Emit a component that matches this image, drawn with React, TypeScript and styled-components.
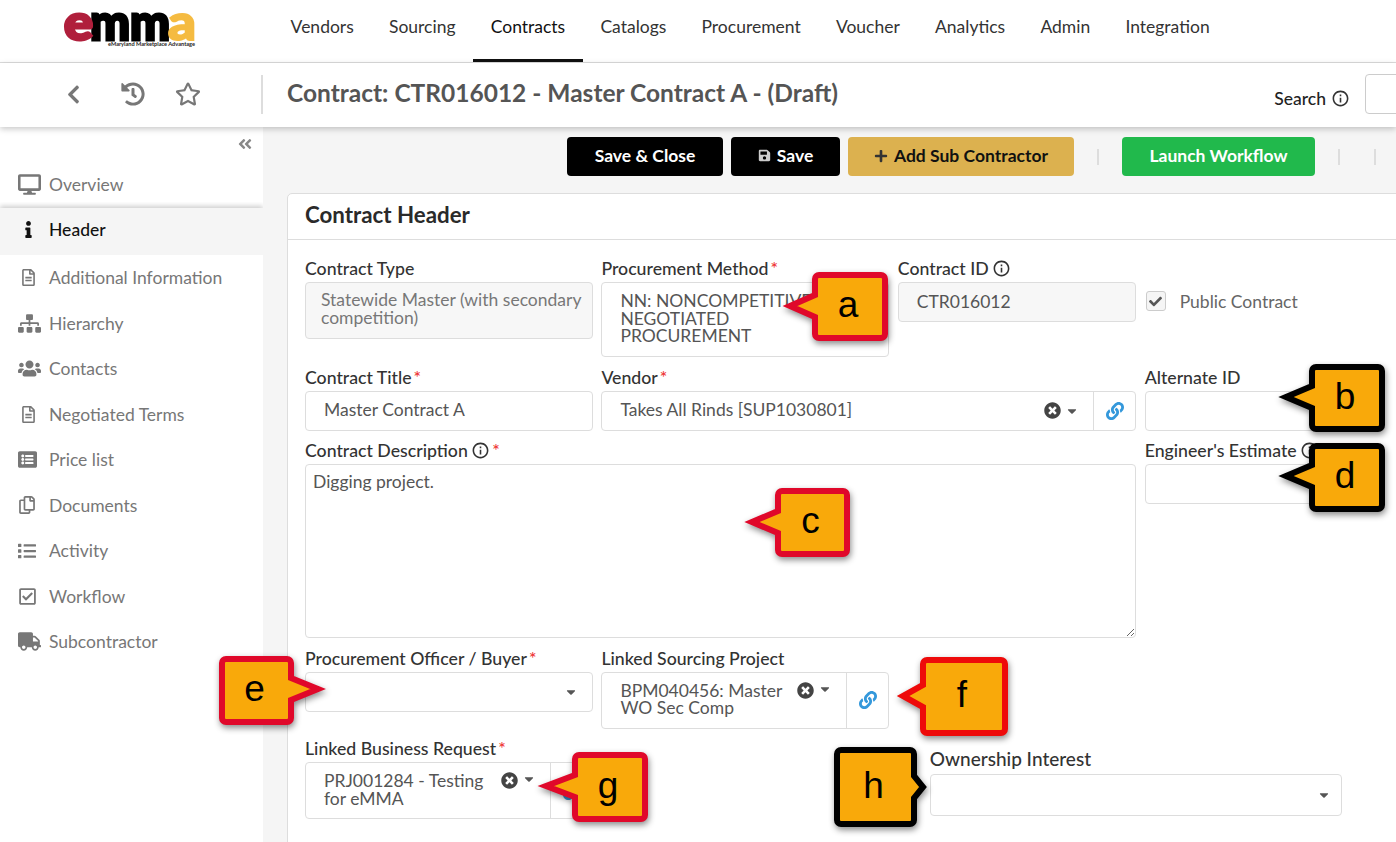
import React from "react";
import styled, { createGlobalStyle } from "styled-components";
import {
  FaAngleDoubleLeft, FaCaretDown, FaCheck, FaChevronLeft, FaDesktop, FaHistory, FaInfo, FaLink, FaList,
  FaListAlt, FaRegCheckSquare, FaRegCopy, FaRegFileAlt, FaRegStar, FaSave, FaSitemap, FaTimesCircle, FaTruck, FaUsers, FaPlus,
} from "react-icons/fa";
import { MdInfoOutline } from "react-icons/md";

const GlobalStyle = createGlobalStyle`
  html, body { margin: 0; padding: 0; background: #fff; overflow: hidden; }
  * { box-sizing: border-box; }
  body { font-family: Lato, "Open Sans", sans-serif; }
`;

const Page = styled.div`
  position: relative;
  width: 1396px;
  height: 842px;
  overflow: hidden;
  display: flex;
  flex-direction: column;
`;

const TopNav = styled.header`
  display: flex;
  height: 63px;
  border-bottom: 1px solid #ddd;
  flex: none;
`;

const LogoSlot = styled.div`
  width: 273px;
  padding: 10px 0 0 62px;
  flex: none;
`;

const LogoSvg = styled.svg`
  overflow: visible;
`;

const NavItem = styled.div<{ $active?: boolean }>`
  padding: 0 17.6px 6px;
  display: flex;
  align-items: center;
  font-size: 17.5px;
  color: ${(p) => (p.$active ? "#111" : "#333")};
  border-bottom: 3px solid ${(p) => (p.$active ? "#111" : "transparent")};
  height: 62px;
`;

const SubBar = styled.div`
  position: relative;
  z-index: 2;
  height: 64px;
  flex: none;
  display: flex;
  align-items: center;
  background: #fff;
  box-shadow: 0 2px 6px rgba(0, 0, 0, 0.22);
`;

const SubIcons = styled.div`
  width: 263px;
  height: 39px;
  flex: none;
  display: flex;
  align-items: center;
  padding-left: 63px;
  gap: 37px;
  color: #777;
  border-right: 2px solid #ddd;
  margin-bottom: 2px;
`;

const FavIcon = styled(FaRegStar)`
  margin-left: -7px;
`;

const PageTitle = styled.h1`
  margin: 0 0 6px 24px;
  font-size: 24.5px;
  font-weight: 700;
  color: #555;
  white-space: nowrap;
`;

const SearchBox = styled.div`
  margin-left: auto;
  display: flex;
  align-items: center;
  gap: 5px;
  font-size: 17.5px;
  font-weight: 500;
  color: #222;
  padding-top: 9px;
  margin-bottom: 2px;
`;

const SearchInput = styled.div`
  width: 60px;
  height: 40px;
  margin: -9px -29px 0 10px;
  border: 1px solid #ccc;
  border-radius: 4px;
`;

const Body = styled.div`
  flex: 1;
  display: flex;
  min-height: 0;
`;

const Sidebar = styled.nav`
  width: 263px;
  flex: none;
  background: #fff;
`;

const Collapse = styled.div`
  height: 34px;
  padding: 9px 10px 0 0;
  display: flex;
  justify-content: flex-end;
  color: #888;
`;

const SideItem = styled.div<{ $active?: boolean; $tall?: boolean }>`
  height: ${(p) => (p.$tall ? "47px" : "45.5px")};
  display: flex;
  align-items: center;
  padding-left: 18px;
  font-size: 17.5px;
  color: ${(p) => (p.$active ? "#111" : "#777")};
  background: ${(p) => (p.$active ? "#f5f5f5" : "#fff")};
  ${(p) => p.$active && "font-weight: 500; padding-bottom: 4px; box-shadow: 0 -2px 5px rgba(0,0,0,.2); clip-path: inset(-6px 0 0 0);"}
`;

const SideIcon = styled.span`
  width: 31px;
  flex: none;
  display: flex;
  align-items: center;
`;

const IconNudge = styled.span`
  display: flex;
  padding-left: 2px;
`;

const Main = styled.main`
  flex: 1;
  min-width: 0;
  background: #f5f5f5;
  padding-top: 10px;
`;

const Toolbar = styled.div`
  display: flex;
  align-items: center;
  height: 39px;
  padding-left: 304px;
  gap: 8px;
`;

const ActionButton = styled.div<{ $bg: string; $fg: string; $w: number }>`
  width: ${(p) => p.$w}px;
  height: 39px;
  flex: none;
  border-radius: 4px;
  background: ${(p) => p.$bg};
  color: ${(p) => p.$fg};
  font-size: 17.5px;
  font-weight: 700;
  display: flex;
  align-items: center;
  justify-content: center;
  gap: 6px;
  padding-bottom: 2px;
`;

const ToolSep = styled.div<{ $gap: number }>`
  width: 2px;
  height: 16px;
  flex: none;
  background: #ddd;
  margin: 0 ${(p) => p.$gap}px;
`;

const Panel = styled.section`
  width: 1200px;
  margin: 17px 0 0 24px;
  background: #fff;
  border: 1px solid #ddd;
  border-radius: 5px 0 0 0;
  height: 700px;
`;

const PanelTitle = styled.h2`
  margin: 0;
  height: 46px;
  padding: 7px 0 0 17px;
  border-bottom: 1px solid #ddd;
  font-size: 22.3px;
  font-weight: 700;
  color: #2a2a2a;
  line-height: 27px;
`;

const FormGrid = styled.div`
  display: grid;
  grid-template-columns: 288px 288px 238.5px 240px;
  column-gap: 8.4px;
  row-gap: 10.5px;
  padding: 19px 0 0 17px;
  align-items: start;
`;

const Field = styled.div<{ $span?: number; $offset?: number; $top?: number }>`
  grid-column: span ${(p) => p.$span ?? 1};
  margin-left: ${(p) => p.$offset ?? 0}px;
  margin-top: ${(p) => p.$top ?? 0}px;
`;

const Label = styled.div<{ $h?: number; $size?: number }>`
  height: ${(p) => p.$h ?? 23}px;
  font-size: ${(p) => p.$size ?? 17.7}px;
  font-weight: 500;
  line-height: 20px;
  color: #333;
  display: flex;
  align-items: flex-start;
  gap: 3.5px;
  white-space: nowrap;
`;

const Star = styled.span`
  color: #e33;
  margin-left: -1.5px;
`;

const TextBox = styled.input<{ $h?: number }>`
  display: block;
  width: 100%;
  height: ${(p) => p.$h ?? 40}px;
  border: 1px solid #ddd;
  border-radius: 4px;
  padding: 0 18px 2px;
  font: 17.5px Lato, sans-serif;
  color: #555;
  background: ${(p) => (p.disabled ? "#f7f7f7" : "#fff")};
  outline: none;
`;

const NoteArea = styled.textarea`
  display: block;
  width: 100%;
  height: 174px;
  border: 1px solid #ddd;
  border-radius: 4px;
  padding: 8px 7px;
  font: 17.5px/18px Lato, sans-serif;
  color: #555;
  outline: none;
`;

const WrapBox = styled.div<{ $h: number; $pad: number; $left: number; $right: number; $muted?: boolean }>`
  height: ${(p) => p.$h}px;
  border: 1px solid #ddd;
  border-radius: 4px;
  padding: ${(p) => p.$pad}px ${(p) => p.$right}px 0 ${(p) => p.$left}px;
  font-size: 17.5px;
  line-height: 17.5px;
  color: ${(p) => (p.$muted ? "#777" : "#555")};
  background: ${(p) => (p.$muted ? "#f7f7f7" : "#fff")};
`;

const SelectBox = styled.div<{ $h?: number; $w?: number }>`
  display: flex;
  height: ${(p) => p.$h ?? 40}px;
  width: ${(p) => (p.$w ? `${p.$w}px` : "auto")};
  border: 1px solid #ddd;
  border-radius: 4px;
  background: #fff;
  font-size: 17.5px;
  line-height: 17.5px;
  color: #555;
`;

const SelectValue = styled.div`
  flex: 1;
  min-width: 0;
  padding: 0 6px 2px 18px;
  display: flex;
  align-items: center;
`;

const SelectControls = styled.div<{ $top?: boolean; $right?: number }>`
  flex: none;
  display: flex;
  align-items: ${(p) => (p.$top ? "flex-start" : "center")};
  padding: ${(p) => (p.$top ? "9px" : "0")} ${(p) => p.$right ?? 14}px 0 0;
  gap: 4px;
  color: #444;
`;

const LinkCell = styled.div`
  width: 42px;
  flex: none;
  border-left: 1px solid #ddd;
  display: flex;
  align-items: center;
  justify-content: center;
  color: #3498db;
`;

const CheckRow = styled.div`
  display: flex;
  align-items: center;
  height: 38px;
  margin-top: 23px;
  gap: 14px;
  padding-left: 1px;
  font-size: 17.5px;
  color: #666;
`;

const CheckMark = styled.div`
  width: 20px;
  height: 20px;
  border: 1px solid #ccc;
  border-radius: 3px;
  background: #f5f5f5;
  color: #555;
  display: flex;
  align-items: center;
  justify-content: center;
`;

const CalloutWrap = styled.div<{ $x: number; $y: number; $w: number; $h: number }>`
  position: absolute;
  z-index: 5;
  left: ${(p) => p.$x}px;
  top: ${(p) => p.$y}px;
  width: ${(p) => p.$w}px;
  height: ${(p) => p.$h}px;
`;

const CalloutSvg = styled.svg`
  position: absolute;
  left: -50px;
  top: -20px;
  overflow: visible;
  filter: drop-shadow(1px 3px 3px rgba(0, 0, 0, 0.45));
`;

const CalloutLetter = styled.div`
  position: absolute;
  inset: 0;
  display: flex;
  align-items: center;
  justify-content: center;
  font: 37px "Liberation Sans", Arial, sans-serif;
  color: #000;
  padding: 0 4px 3px 0;
`;

type CalloutProps = {
  letter: string;
  x: number;
  y: number;
  w: number;
  h: number;
  tipX: number;
  tipY: number;
  color: string;
};

// tip is the outer point; the stroke miter adds about 8px beyond the path point
function Callout({ letter, x, y, w, h, tipX, tipY, color }: CalloutProps) {
  const s = 3;
  const r = 4;
  const l = s;
  const t = s;
  const ri = w - s;
  const b = h - s;
  const cy = tipY - y;
  const base = 11;
  const left = tipX < x;
  const px = left ? tipX - x + 8 : tipX - x - 8;
  const leftSide = left ? `V${cy + base} L${px},${cy} L${l},${cy - base}` : "";
  const rightSide = left ? "" : `V${cy - base} L${px},${cy} L${ri},${cy + base}`;
  const d =
    `M${l + r},${t} H${ri - r} A${r},${r} 0 0 1 ${ri},${t + r} ${rightSide} V${b - r} A${r},${r} 0 0 1 ${ri - r},${b} ` +
    `H${l + r} A${r},${r} 0 0 1 ${l},${b - r} ${leftSide} V${t + r} A${r},${r} 0 0 1 ${l + r},${t} Z`;
  return (
    <CalloutWrap $x={x} $y={y} $w={w} $h={h}>
      <CalloutSvg width={w + 100} height={h + 40} viewBox={`-50 -20 ${w + 100} ${h + 40}`}>
        <path d={d} fill="#f9a90a" stroke={color} strokeWidth={6} strokeLinejoin="miter" strokeMiterlimit={8} />
      </CalloutSvg>
      <CalloutLetter>{letter}</CalloutLetter>
    </CalloutWrap>
  );
}

function EmmaLogo() {
  return (
    <LogoSvg width="140" height="42" viewBox="0 0 140 42">
      <text x="28" y="30" fontFamily="Lato" fontWeight="900" fontSize="50" fill="#000" stroke="#000" strokeWidth="3" textLength="80" lengthAdjust="spacingAndGlyphs">mm</text>
      <text x="2" y="30" fontFamily="Lato" fontWeight="900" fontSize="50" fill="#b01f3c" stroke="#b01f3c" strokeWidth="3" textLength="29" lengthAdjust="spacingAndGlyphs">e</text>
      <text x="106" y="30" fontFamily="Lato" fontWeight="900" fontSize="50" fill="#f5bb41" stroke="#f5bb41" strokeWidth="2" textLength="28" lengthAdjust="spacingAndGlyphs">a</text>
      <text x="46" y="36" fontFamily="Lato" fontWeight="700" fontSize="5.4" fill="#222" textLength="87" lengthAdjust="spacingAndGlyphs">eMaryland Marketplace Advantage</text>
    </LogoSvg>
  );
}

const navItems = ["Vendors", "Sourcing", "Contracts", "Catalogs", "Procurement", "Voucher", "Analytics", "Admin", "Integration"];

const sideItems = [
  { label: "Overview", icon: <FaDesktop size={23} />, tall: true },
  { label: "Header", icon: <IconNudge><FaInfo size={17} /></IconNudge>, tall: true, active: true },
  { label: "Additional Information", icon: <IconNudge><FaRegFileAlt size={17} /></IconNudge> },
  { label: "Hierarchy", icon: <FaSitemap size={23} /> },
  { label: "Contacts", icon: <FaUsers size={23} /> },
  { label: "Negotiated Terms", icon: <IconNudge><FaRegFileAlt size={17} /></IconNudge> },
  { label: "Price list", icon: <FaListAlt size={19} /> },
  { label: "Documents", icon: <FaRegCopy size={18} /> },
  { label: "Activity", icon: <FaList size={18} /> },
  { label: "Workflow", icon: <FaRegCheckSquare size={19} /> },
  { label: "Subcontractor", icon: <FaTruck size={23} /> },
];

const Info = () => <MdInfoOutline size={19} color="#333" />;
const Caret = () => <FaCaretDown size={14} color="#555" />;
const Clear = () => <FaTimesCircle size={17} color="#444" />;

export default function App() {
  return (
    <Page>
      <GlobalStyle />
      <TopNav>
        <LogoSlot><EmmaLogo /></LogoSlot>
        {navItems.map((n) => (
          <NavItem key={n} $active={n === "Contracts"}>{n}</NavItem>
        ))}
      </TopNav>
      <SubBar>
        <SubIcons>
          <FaChevronLeft size={21} />
          <FaHistory size={24} />
          <FavIcon size={26} />
        </SubIcons>
        <PageTitle>Contract: CTR016012 - Master Contract A - (Draft)</PageTitle>
        <SearchBox>
          Search <Info />
          <SearchInput />
        </SearchBox>
      </SubBar>
      <Body>
        <Sidebar>
          <Collapse><FaAngleDoubleLeft size={16} /></Collapse>
          {sideItems.map((s) => (
            <SideItem key={s.label} $active={s.active} $tall={s.tall}>
              <SideIcon>{s.icon}</SideIcon>
              {s.label}
            </SideItem>
          ))}
        </Sidebar>
        <Main>
          <Toolbar>
            <ActionButton $bg="#000" $fg="#fff" $w={156}>Save &amp; Close</ActionButton>
            <ActionButton $bg="#000" $fg="#fff" $w={109}><FaSave size={13} color="#ccc" /> Save</ActionButton>
            <ActionButton $bg="#dcb14f" $fg="#111" $w={226}><FaPlus size={14} color="#333" /> Add Sub Contractor</ActionButton>
            <ToolSep $gap={15} />
            <ActionButton $bg="#21b94c" $fg="#fff" $w={193}>Launch Workflow</ActionButton>
            <ToolSep $gap={15} />
            <ToolSep $gap={11} />
          </Toolbar>
          <Panel>
            <PanelTitle>Contract Header</PanelTitle>
            <FormGrid>
              <Field>
                <Label>Contract Type</Label>
                <WrapBox $h={57} $pad={8} $left={15} $right={8} $muted>Statewide Master (with secondary competition)</WrapBox>
              </Field>
              <Field>
                <Label>Procurement Method<Star>*</Star></Label>
                <WrapBox $h={75} $pad={9} $left={18} $right={70}>NN: NONCOMPETITIVE NEGOTIATED PROCUREMENT</WrapBox>
              </Field>
              <Field>
                <Label>Contract ID <Info /></Label>
                <TextBox disabled readOnly value="CTR016012" />
              </Field>
              <Field>
                <CheckRow>
                  <CheckMark><FaCheck size={13} /></CheckMark>
                  Public Contract
                </CheckRow>
              </Field>

              <Field>
                <Label>Contract Title<Star>*</Star></Label>
                <TextBox readOnly value="Master Contract A" />
              </Field>
              <Field $span={2}>
                <Label>Vendor<Star>*</Star></Label>
                <SelectBox>
                  <SelectValue>Takes All Rinds [SUP1030801]</SelectValue>
                  <SelectControls><Clear /><Caret /></SelectControls>
                  <LinkCell><FaLink size={18} /></LinkCell>
                </SelectBox>
              </Field>
              <Field>
                <Label>Alternate ID</Label>
                <TextBox readOnly value="" />
              </Field>

              <Field $span={3}>
                <Label>Contract Description <Info /><Star>*</Star></Label>
                <NoteArea readOnly value="Digging project." />
              </Field>
              <Field>
                <Label>Engineer's Estimate <Info /></Label>
                <TextBox readOnly value="" />
              </Field>

              <Field>
                <Label>Procurement Officer / Buyer<Star>*</Star></Label>
                <SelectBox>
                  <SelectValue />
                  <SelectControls><Caret /></SelectControls>
                </SelectBox>
              </Field>
              <Field>
                <Label>Linked Sourcing Project</Label>
                <SelectBox $h={57}>
                  <SelectValue>BPM040456: Master WO Sec Comp</SelectValue>
                  <SelectControls $top><Clear /><Caret /></SelectControls>
                  <LinkCell><FaLink size={18} /></LinkCell>
                </SelectBox>
              </Field>
              <Field $span={2} />

              <Field>
                <Label>Linked Business Request<Star>*</Star></Label>
                <SelectBox $h={57}>
                  <SelectValue>PRJ001284 - Testing for eMMA</SelectValue>
                  <SelectControls $top><Clear /><Caret /></SelectControls>
                  <LinkCell><FaLink size={18} /></LinkCell>
                </SelectBox>
              </Field>
              <Field />
              <Field $span={2} $offset={32} $top={10}>
                <Label $h={25} $size={19}>Ownership Interest</Label>
                <SelectBox $h={42} $w={412}>
                  <SelectValue />
                  <SelectControls $right={10}><Caret /></SelectControls>
                </SelectBox>
              </Field>
            </FormGrid>
          </Panel>
        </Main>
      </Body>

      <Callout letter="a" x={812} y={272} w={76} h={69} tipX={782} tipY={306} color="#e0082a" />
      <Callout letter="b" x={1309} y={364} w={76} h={68} tipX={1278} tipY={397} color="#000" />
      <Callout letter="c" x={775} y={488} w={75} h={69} tipX={744} tipY={522} color="#e0082a" />
      <Callout letter="d" x={1309} y={443} w={76} h={69} tipX={1278} tipY={476} color="#000" />
      <Callout letter="e" x={219} y={656} w={75} h={69} tipX={326} tipY={689} color="#e0082a" />
      <Callout letter="f" x={920} y={657} w={88} h={79} tipX={895} tipY={696} color="#ee0a0a" />
      <Callout letter="g" x={572} y={752} w={76} h={70} tipX={538} tipY={786} color="#e0082a" />
      <Callout letter="h" x={834} y={747} w={83} h={80} tipX={931} tipY={787} color="#000" />
    </Page>
  );
}
